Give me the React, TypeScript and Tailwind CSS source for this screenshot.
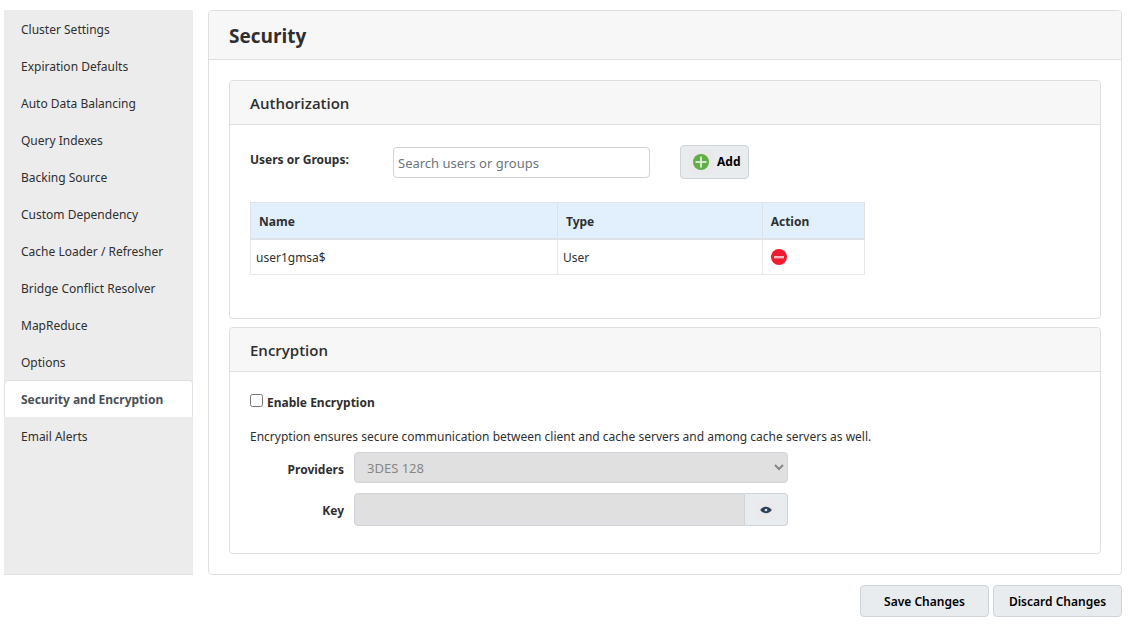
import { useState } from "react";
import type { ReactNode } from "react";

const NAV_ITEMS = [
  "Cluster Settings",
  "Expiration Defaults",
  "Auto Data Balancing",
  "Query Indexes",
  "Backing Source",
  "Custom Dependency",
  "Cache Loader / Refresher",
  "Bridge Conflict Resolver",
  "MapReduce",
  "Options",
  "Security and Encryption",
  "Email Alerts",
];

const USERS = [{ name: "user1gmsa$", type: "User" }];

function AddIcon() {
  return (
    <svg viewBox="0 0 24 24" className="size-6 shrink-0 bg-[#e9e8eb]" aria-hidden="true">
      <circle cx="12" cy="12" r="8" fill="#5fae46" />
      <path d="M12 6.500v11M6.500 12h11" stroke="#d3ebca" strokeWidth="2" />
    </svg>
  );
}

function RemoveIcon() {
  return (
    <svg viewBox="0 0 16 16" className="size-4" aria-hidden="true">
      <circle cx="8" cy="8" r="8" fill="#ee1c2e" />
      <rect x="3" y="7" width="10" height="2.4" fill="#f9b9c0" />
    </svg>
  );
}

function EyeIcon() {
  return (
    <svg viewBox="0 0 18 18" className="size-[18px] bg-[#ebe9ec]" aria-hidden="true">
      <path d="M3.200 9C5 6.600 7 5.800 9 5.800s4 .8 5.800 3.200c-1.800 2.400-3.800 3.200-5.800 3.200S5 11.400 3.200 9z" fill="#2c4058" />
      <circle cx="9" cy="9" r="1.300" fill="#dfe4ea" />
    </svg>
  );
}

function Card({ title, children }: { title: string; children: ReactNode }) {
  return (
    <section className="rounded border border-[#dfdfdf]">
      <h2 className="rounded-t border-b border-[#dfdfdf] bg-[#f7f7f7] px-5 pt-[11px] pb-[9px] font-['Open_Sans',sans-serif] text-[15px] leading-[23px] font-semibold">
        {title}
      </h2>
      {children}
    </section>
  );
}

export default function App() {
  const [active, setActive] = useState("Security and Encryption");
  const [enabled, setEnabled] = useState(false);

  return (
    <div className="bg-white pt-2.5 pr-1.5 pl-1 font-['Noto_Sans',sans-serif] text-[12px] leading-5 text-[#2f2f2f]">
      <div className="flex gap-[15px]">
        <nav className="flex w-[189px] shrink-0 flex-col border-b border-[#dee2e6] bg-[#ececec]">
          {NAV_ITEMS.map((item) => (
            <a
              key={item}
              href="#"
              onClick={() => setActive(item)}
              className={
                item === active
                  ? "rounded-t border border-b-0 border-[#dee2e6] bg-white px-4 pt-[9px] pb-[7px] font-bold whitespace-nowrap text-[#495057]"
                  : "border border-b-0 border-transparent px-4 pt-[9px] pb-[7px] whitespace-nowrap"
              }
            >
              {item}
            </a>
          ))}
        </nav>

        <main className="min-w-0 flex-1 rounded border border-[#dfdfdf]">
          <h1 className="rounded-t border-b border-[#dfdfdf] bg-[#f7f7f7] px-5 pt-[11px] pb-[9px] font-['Open_Sans',sans-serif] text-[19px] leading-7 font-bold">
            Security
          </h1>
          <div className="flex flex-col gap-2 p-5">
            <Card title="Authorization">
              <div className="px-5 pt-5 pb-[43px]">
                <div className="flex items-center">
                  <label htmlFor="users" className="w-[143px] pb-1 font-bold">
                    Users or Groups:
                  </label>
                  <input
                    id="users"
                    type="text"
                    placeholder="Search users or groups"
                    className="h-[31px] w-[257px] rounded-sm border border-[#ced4da] px-1 pt-0.5 text-[13px] placeholder:text-[#6c757d]"
                  />
                  <button
                    type="button"
                    className="ml-[30px] flex h-[34px] w-[69px] items-center gap-1 rounded-sm border border-[#ced4da] bg-[#e9ecef] pl-2 font-bold text-black"
                  >
                    <AddIcon />
                    Add
                  </button>
                </div>
                <table className="mt-[23px] w-full max-w-[615px] table-fixed border-collapse text-left">
                  <thead>
                    <tr className="h-9 bg-[#e2f0fe]">
                      <th className="w-1/2 border border-b-2 border-[#dee2e6] px-2 pt-[3px] font-bold">Name</th>
                      <th className="w-1/3 border border-b-2 border-[#dee2e6] px-2 pt-[3px] font-bold">Type</th>
                      <th className="w-1/6 border border-b-2 border-[#dee2e6] px-2 pt-[3px] font-bold">Action</th>
                    </tr>
                  </thead>
                  <tbody>
                    {USERS.map((user) => (
                      <tr key={user.name} className="h-9">
                        <td className="border border-[#e5e7e9] px-[5px] pt-0.5">{user.name}</td>
                        <td className="border border-[#e5e7e9] px-[5px] pt-0.5">{user.type}</td>
                        <td className="border border-[#e5e7e9] px-2">
                          <button type="button" aria-label={`Remove ${user.name}`} className="block">
                            <RemoveIcon />
                          </button>
                        </td>
                      </tr>
                    ))}
                  </tbody>
                </table>
              </div>
            </Card>

            <Card title="Encryption">
              <div className="px-5 pt-[21px] pb-[27px]">
                <label className="flex items-start gap-1 font-bold">
                  <input
                    type="checkbox"
                    checked={enabled}
                    onChange={(e) => setEnabled(e.target.checked)}
                    className="mt-px size-[13px]"
                  />
                  Enable Encryption
                </label>
                <p className="mt-3.5 mb-[5px]">
                  Encryption ensures secure communication between client and cache servers and among
                  cache servers as well.
                </p>
                <div className="grid grid-cols-[94px_minmax(0,434px)] items-center gap-2.5">
                  <label htmlFor="provider" className="pt-1 text-right font-bold">
                    Providers
                  </label>
                  <select
                    id="provider"
                    disabled={!enabled}
                    className="h-[31px] w-full rounded-sm border border-[#ced4da] bg-[#e0e0e0] pl-2 text-[13px] text-[#6c757d] disabled:text-[#868686]"
                  >
                    <option>3DES 128</option>
                  </select>
                  <label htmlFor="key" className="pt-0.5 text-right font-bold">
                    Key
                  </label>
                  <div className="flex h-[33px]">
                    <input
                      id="key"
                      type="password"
                      disabled={!enabled}
                      className="min-w-0 flex-1 rounded-l-sm border border-[#ced4da] bg-[#e0e0e0] px-3"
                    />
                    <button
                      type="button"
                      aria-label="Show key"
                      className="flex w-[43px] items-center justify-center rounded-r-sm border border-l-0 border-[#ced4da] bg-[#e9ecef]"
                    >
                      <EyeIcon />
                    </button>
                  </div>
                </div>
              </div>
            </Card>
          </div>
        </main>
      </div>

      <div className="flex justify-end gap-1 pt-2.5 pb-2 font-semibold text-black">
        <button type="button" className="h-8 w-[129px] rounded-sm border border-[#ced4da] bg-[#e9ecef] pt-0.5">
          Save Changes
        </button>
        <button type="button" className="h-8 w-[129px] rounded-sm border border-[#ced4da] bg-[#e9ecef] pt-0.5">
          Discard Changes
        </button>
      </div>
    </div>
  );
}
